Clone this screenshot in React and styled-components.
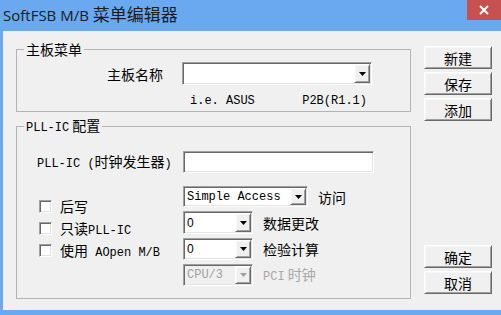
import React from 'react';
import styled, { createGlobalStyle, css } from 'styled-components';

const GlobalStyle = createGlobalStyle`
	html, body {
		margin: 0;
		padding: 0;
		background: #6aa9ef;
	}
	body {
		font-family: 'Noto Sans CJK SC', sans-serif;
		color: #000;
	}
`;

// classic win32 3d edges
const sunken = css`
	box-sizing: border-box;
	border: 1px solid;
	border-color: #a0a0a0 #ffffff #ffffff #a0a0a0;
	box-shadow: inset 1px 1px 0 #696969, inset -1px -1px 0 #e3e3e3;
`;

const raised = css`
	box-sizing: border-box;
	border: 1px solid;
	border-color: #ffffff #696969 #696969 #ffffff;
	box-shadow: inset 1px 1px 0 #f7f7f7, inset -1px -1px 0 #a0a0a0;
`;

const Arrow = ({ disabled }) => (
	<svg width="7" height="4" viewBox="0 0 7 4">
		<polygon points="0,0 7,0 3.5,4" fill={disabled ? '#a0a0a0' : '#000'} />
	</svg>
);

const DropDown = ({ width, height, value, sans, disabled }) => (
	<Combo $w={width} $h={height} $disabled={disabled}>
		<ComboText $sans={sans} $disabled={disabled}>{value}</ComboText>
		<DropButton>
			<Arrow disabled={disabled} />
		</DropButton>
	</Combo>
);

const App = () => {
	return (
		<React.Fragment>
			<GlobalStyle />
			<Window>
				<TitleBar>
					<Title>
						SoftFSB M/B <TitleCjk>菜单编辑器</TitleCjk>
					</Title>
					<CloseButton>
						<svg width="10" height="10" viewBox="0 0 10 10">
							<path d="M1 1 L9 9 M9 1 L1 9" stroke="#fff" strokeWidth="2" />
						</svg>
					</CloseButton>
				</TitleBar>

				<Client>
					<LeftColumn>
						<Group>
							<Legend>主板菜单</Legend>
							<BoardRow>
								<FieldLabel $w={146} $right>主板名称</FieldLabel>
								<DropDown width={190} height={23} value="" />
							</BoardRow>
							<HintRow>
								<span>i.e. ASUS</span>
								<span>P2B(R1.1)</span>
							</HintRow>
						</Group>

						<Group $bottom={12}>
							<Legend>
								<Lat>PLL-IC</Lat> 配置
							</Legend>
							<PllRow>
								<FieldLabel $w={146}>
									<Lat>PLL-IC (</Lat>时钟发生器<Lat>)</Lat>
								</FieldLabel>
								<EditBox />
							</PllRow>
							<Options>
								<CheckList>
									<CheckRow>
										<CheckBox />
										<span>后写</span>
									</CheckRow>
									<CheckRow>
										<CheckBox />
										<span>
											只读<Lat>PLL-IC</Lat>
										</span>
									</CheckRow>
									<CheckRow>
										<CheckBox />
										<span>
											使用<Lat> AOpen M/B</Lat>
										</span>
									</CheckRow>
								</CheckList>
								<ComboList>
									<ComboRow>
										<DropDown width={125} height={21} value="Simple Access" />
										<span>访问</span>
									</ComboRow>
									<ComboRow>
										<DropDown width={70} height={23} value="0" sans />
										<span>数据更改</span>
									</ComboRow>
									<ComboRow>
										<DropDown width={70} height={22} value="0" sans />
										<span>检验计算</span>
									</ComboRow>
									<ComboRow $disabled>
										<DropDown width={70} height={22} value="CPU/3" disabled />
										<span>
											<Lat>PCI</Lat> 时钟
										</span>
									</ComboRow>
								</ComboList>
							</Options>
						</Group>
					</LeftColumn>

					<ButtonColumn>
						<ButtonStack>
							<Button>新建</Button>
							<Button>保存</Button>
							<Button>添加</Button>
						</ButtonStack>
						<ButtonStack>
							<Button>确定</Button>
							<Button>取消</Button>
						</ButtonStack>
					</ButtonColumn>
				</Client>
			</Window>
		</React.Fragment>
	);
};

export default App;

const Window = styled.div`
	width: 501px;
	height: 315px;
	display: flex;
	flex-direction: column;
	background: #6aa9ef;
	overflow: hidden;
`;

const TitleBar = styled.div`
	height: 31px;
	flex-shrink: 0;
	display: flex;
	justify-content: space-between;
	align-items: flex-start;
`;

const Title = styled.div`
	padding: 3px 0 0 3px;
	font-family: 'Open Sans', sans-serif;
	font-size: 15px;
	line-height: 22px;
	color: #1b1b1b;
	white-space: pre;
`;

const TitleCjk = styled.span`
	font-family: 'Noto Sans CJK SC', sans-serif;
	font-size: 17px;
`;

const CloseButton = styled.div`
	width: 34px;
	height: 20px;
	background: #c75050;
	display: flex;
	align-items: center;
	justify-content: center;
`;

const Client = styled.div`
	flex: 1;
	margin: 0 0 5px 3px;
	background: #f0f0f0;
	display: flex;
	gap: 13px;
	padding: 10px 0 0 13px;
	font-size: 14px;
`;

const LeftColumn = styled.div`
	display: flex;
	flex-direction: column;
	gap: 5px;
`;

const Group = styled.fieldset`
	width: 395px;
	box-sizing: border-box;
	margin: 0;
	padding: 0 0 ${props => props.$bottom || 3}px 0;
	min-inline-size: 0;
	border: 1px solid #b4b4b4;
`;

const Legend = styled.legend`
	margin-left: 7px;
	padding: 0 2px;
	font-size: 14px;
	line-height: 16px;
	white-space: pre;
`;

const Lat = styled.span`
	font-family: 'Liberation Mono', monospace;
	font-size: 12px;
`;

const BoardRow = styled.div`
	display: flex;
	align-items: center;
	margin-top: 5px;
`;

const FieldLabel = styled.div`
	width: ${props => props.$w}px;
	margin-right: ${props => (props.$right ? 19 : 0)}px;
	padding-left: ${props => (props.$right ? 0 : 20)}px;
	text-align: ${props => (props.$right ? 'right' : 'left')};
	font-size: 14px;
	line-height: 16px;
	white-space: pre;
`;

const HintRow = styled.div`
	width: 177px;
	margin: 9px 0 0 173px;
	display: flex;
	justify-content: space-between;
	font-family: 'Liberation Mono', monospace;
	font-size: 12px;
	line-height: 14px;
`;

const PllRow = styled.div`
	display: flex;
	align-items: center;
	margin-top: 15px;
`;

const EditBox = styled.div`
	${sunken};
	width: 191px;
	height: 22px;
	background: #fff;
`;

const Options = styled.div`
	display: flex;
	margin-top: 13px;
`;

const CheckList = styled.div`
	width: 146px;
	margin-left: 20px;
	padding: 9px 0 0 2px;
	box-sizing: border-box;
	display: flex;
	flex-direction: column;
`;

const CheckRow = styled.div`
	height: 22px;
	display: flex;
	align-items: center;
	gap: 8px;
	font-size: 14px;
	white-space: pre;
`;

const CheckBox = styled.span`
	${sunken};
	width: 13px;
	height: 13px;
	flex-shrink: 0;
	background: #fff;
`;

const ComboList = styled.div`
	display: flex;
	flex-direction: column;
	gap: 4px;
`;

const ComboRow = styled.div`
	display: flex;
	align-items: center;
	gap: 10px;
	font-size: 14px;
	line-height: 16px;
	color: ${props => (props.$disabled ? '#a8a8a8' : '#000')};
	white-space: pre;
`;

const Combo = styled.div`
	${sunken};
	width: ${props => props.$w}px;
	height: ${props => props.$h}px;
	padding: 1px;
	display: flex;
	align-items: stretch;
	background: ${props => (props.$disabled ? '#f0f0f0' : '#fff')};
`;

const ComboText = styled.span`
	flex: 1;
	padding-left: 2px;
	display: flex;
	align-items: center;
	font-family: ${props => (props.$sans ? "'Liberation Sans', sans-serif" : "'Liberation Mono', monospace")};
	font-size: 12px;
	color: ${props => (props.$disabled ? '#a0a0a0' : '#000')};
	white-space: pre;
	overflow: hidden;
`;

const DropButton = styled.span`
	${raised};
	width: 16px;
	flex-shrink: 0;
	background: #f0f0f0;
	display: flex;
	align-items: center;
	justify-content: center;
`;

const ButtonColumn = styled.div`
	display: flex;
	flex-direction: column;
	justify-content: space-between;
	padding: 5px 0 16px;
`;

const ButtonStack = styled.div`
	display: flex;
	flex-direction: column;
	gap: 3px;
`;

const Button = styled.button`
	${raised};
	width: 68px;
	height: 23px;
	padding: 0;
	background: #f0f0f0;
	font-family: 'Noto Sans CJK SC', sans-serif;
	font-size: 14px;
	line-height: 1;
	color: #000;
`;
